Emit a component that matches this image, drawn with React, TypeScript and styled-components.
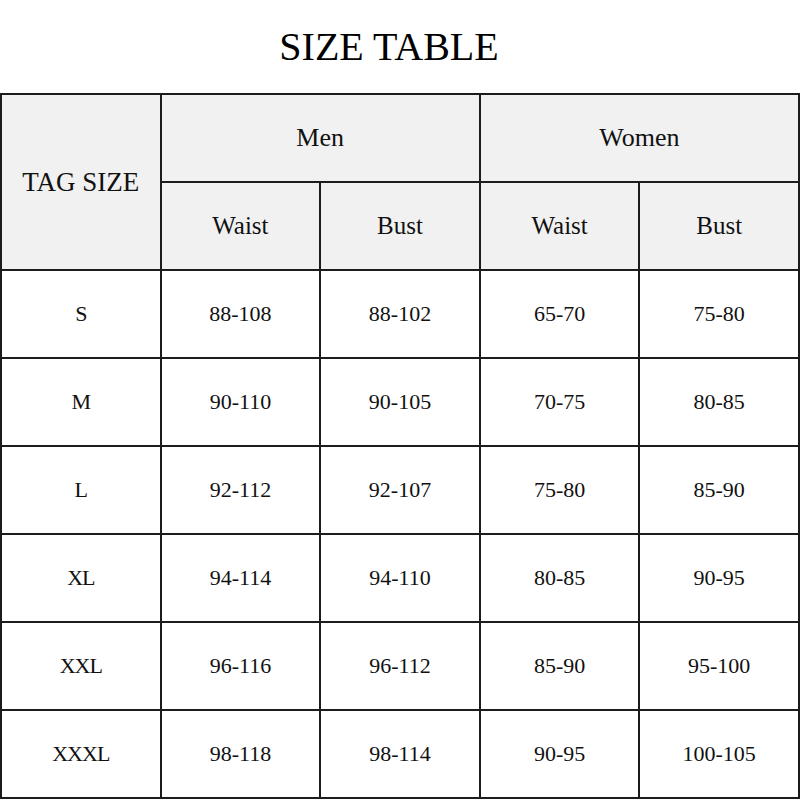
import React from "react";
import styled, { createGlobalStyle } from "styled-components";

const GlobalStyle = createGlobalStyle`
  html, body {
    margin: 0;
    padding: 0;
    background: #ffffff;
  }
  body {
    font-family: "Liberation Serif", "Times New Roman", serif;
    color: #111111;
  }
`;

const Page = styled.div`
  width: 800px;
  display: flex;
  flex-direction: column;
`;

const Title = styled.h1`
  margin: 0;
  height: 93px;
  padding-right: 22px;
  display: flex;
  align-items: center;
  justify-content: center;
  font-family: "Liberation Serif", "Times New Roman", serif;
  font-weight: normal;
  font-size: 40px;
  color: #000000;
`;

const Grid = styled.div`
  display: grid;
  grid-template-columns: repeat(5, 1fr);
  grid-auto-rows: 86px;
  gap: 2px;
  padding: 2px;
  background: #1c1c1c;
  width: 800px;
  box-sizing: border-box;
`;

const Cell = styled.div<{ $head?: boolean; $colSpan?: number; $rowSpan?: number; $size?: number; $tight?: boolean }>`
  display: flex;
  align-items: center;
  justify-content: center;
  background: ${(p) => (p.$head ? "#f1f1f1" : "#ffffff")};
  grid-column: span ${(p) => p.$colSpan ?? 1};
  grid-row: span ${(p) => p.$rowSpan ?? 1};
  font-size: ${(p) => p.$size ?? 22}px;
  letter-spacing: ${(p) => (p.$tight ? "-1px" : "0")};
  color: #111111;
`;

const rows: [string, string, string, string, string][] = [
  ["S", "88-108", "88-102", "65-70", "75-80"],
  ["M", "90-110", "90-105", "70-75", "80-85"],
  ["L", "92-112", "92-107", "75-80", "85-90"],
  ["XL", "94-114", "94-110", "80-85", "90-95"],
  ["XXL", "96-116", "96-112", "85-90", "95-100"],
  ["XXXL", "98-118", "98-114", "90-95", "100-105"],
];

export default function App() {
  return (
    <>
      <GlobalStyle />
      <Page>
        <Title>SIZE TABLE</Title>
        <Grid>
          <Cell $head $rowSpan={2} $size={27}>TAG SIZE</Cell>
          <Cell $head $colSpan={2} $size={26}>Men</Cell>
          <Cell $head $colSpan={2} $size={26}>Women</Cell>
          <Cell $head $size={25}>Waist</Cell>
          <Cell $head $size={25}>Bust</Cell>
          <Cell $head $size={25}>Waist</Cell>
          <Cell $head $size={25}>Bust</Cell>
          {rows.map((r) =>
            r.map((v, i) => (
              <Cell key={r[0] + i} $tight={i === 0}>
                {v}
              </Cell>
            ))
          )}
        </Grid>
      </Page>
    </>
  );
}
